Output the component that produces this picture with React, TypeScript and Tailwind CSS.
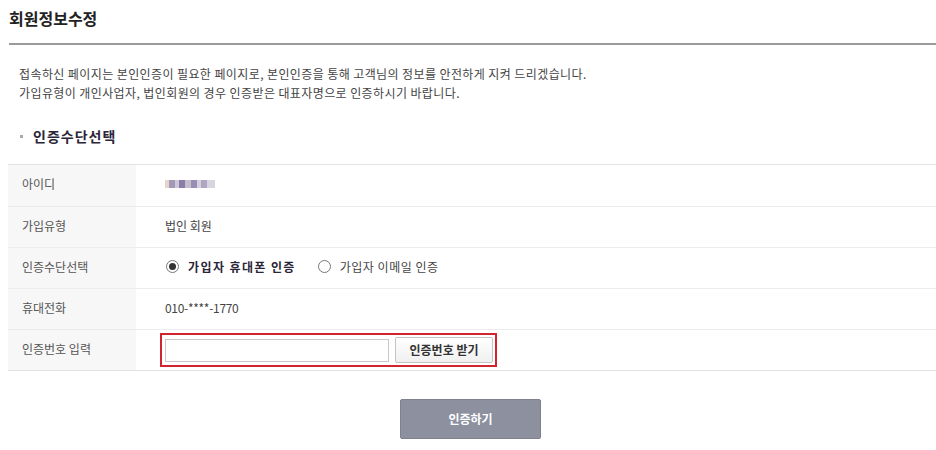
import { useState } from "react";

const rows = ["아이디", "가입유형", "인증수단선택", "휴대전화", "인증번호 입력"];

export default function App() {
  const [method, setMethod] = useState("phone");

  return (
    <div
      className="w-[936px] h-[450px] bg-white text-[#333] overflow-hidden"
      style={{ fontFamily: '"Noto Sans CJK KR", "Noto Sans", sans-serif' }}
    >
      <div className="pl-[9px]">
        <h1 className="pt-[7px] h-[43px] text-[16px] leading-[22px] font-bold text-[#222]">회원정보수정</h1>
        <div className="h-[2px] bg-[#9a9a9a]" />
      </div>

      <div className="pl-[19px] pt-[19px] text-[12px] leading-[19px] text-[#444] tracking-[0.4px]">
        <p>접속하신 페이지는 본인인증이 필요한 페이지로, 본인인증을 통해 고객님의 정보를 안전하게 지켜 드리겠습니다.</p>
        <p>가입유형이 개인사업자, 법인회원의 경우 인증받은 대표자명으로 인증하시기 바랍니다.</p>
      </div>

      <div className="flex items-center pl-[20px] pt-[24px] pb-[18px]">
        <span className="w-[3px] h-[3px] bg-[#aaa] mr-[10px]" />
        <span className="text-[14px] leading-[20px] font-bold text-[#2b2538] tracking-[1px]">인증수단선택</span>
      </div>

      <div className="ml-[8px] border-t border-b border-[#e2e2e2] text-[12px] text-[#444]">
        {rows.map((label, i) => (
          <div key={label} className={`flex h-[41px] ${i > 0 ? "border-t border-[#ececec]" : ""}`}>
            <div className="w-[128px] bg-[#f7f7f7] flex items-center pl-[14px] pb-[3px] text-[#555]">{label}</div>
            <div className={`flex-1 flex items-center pl-[29px] ${i === 4 ? "" : "pb-[3px]"}`}>
              {i === 0 && (
                <div className="flex h-[8px] w-[50px]">
                  <span className="w-[4px] bg-[#e8d4c8]" />
                  <span className="w-[6px] bg-[#a49ab8]" />
                  <span className="w-[4px] bg-[#cfc8da]" />
                  <span className="w-[6px] bg-[#8a7ea6]" />
                  <span className="w-[6px] bg-[#c6bcd0]" />
                  <span className="w-[6px] bg-[#9a8fb2]" />
                  <span className="w-[4px] bg-[#d5cfde]" />
                  <span className="w-[6px] bg-[#b0a6c2]" />
                  <span className="w-[8px] bg-[#d8d4e0]" />
                </div>
              )}
              {i === 1 && <span>법인 회원</span>}
              {i === 2 && (
                <div className="flex items-center pl-[1px]">
                  <button onClick={() => setMethod("phone")} className="flex items-center">
                    <span className="w-[13px] h-[13px] rounded-full border border-[#777] flex items-center justify-center">
                      {method === "phone" && <span className="w-[7px] h-[7px] rounded-full bg-[#333]" />}
                    </span>
                    <span className={`ml-[9px] ${method === "phone" ? "font-bold text-[#2b2538] tracking-[1.4px]" : "tracking-[0.5px]"}`}>가입자 휴대폰 인증</span>
                  </button>
                  <button onClick={() => setMethod("email")} className="flex items-center ml-[22px]">
                    <span className="w-[13px] h-[13px] rounded-full border border-[#777] flex items-center justify-center">
                      {method === "email" && <span className="w-[7px] h-[7px] rounded-full bg-[#333]" />}
                    </span>
                    <span className={`ml-[9px] ${method === "email" ? "font-bold text-[#2b2538] tracking-[1.4px]" : "tracking-[0.5px]"}`}>가입자 이메일 인증</span>
                  </button>
                </div>
              )}
              {i === 3 && <span className="tracking-[-0.3px]">010-****-1770</span>}
              {i === 4 && (
                <div className="-ml-[5px] flex items-center border-2 border-[#d2232e] h-[34px] w-[337px] pl-[3px]">
                  <input className="w-[224px] h-[23px] border border-[#c8c8c8] outline-none px-1" />
                  <button className="ml-[6px] w-[98px] h-[26px] border border-[#c4c4c4] rounded-[2px] bg-gradient-to-b from-white to-[#f0f0f0] font-bold text-[#333]">
                    인증번호 받기
                  </button>
                </div>
              )}
            </div>
          </div>
        ))}
      </div>

      <div className="flex justify-center pt-[28px] pl-[5px]">
        <button className="w-[141px] h-[40px] bg-[#8d909f] border border-[#7e8190] rounded-[2px] text-white text-[12px] font-bold">
          인증하기
        </button>
      </div>
    </div>
  );
}
